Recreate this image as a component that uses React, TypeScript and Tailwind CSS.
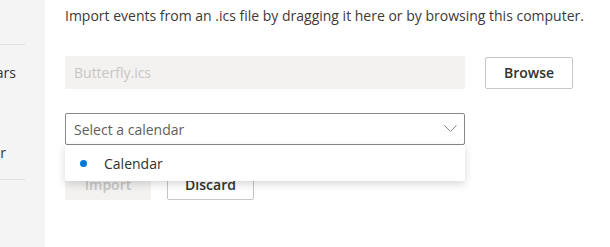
import React from 'react';

export default function App() {
  return (
    <div
      className="flex h-[247px] w-[610px] overflow-hidden bg-white text-[#323130]"
      style={{ fontFamily: '"Segoe UI", "Open Sans", sans-serif' }}
    >
      <aside className="w-[45px] shrink-0 overflow-hidden bg-[#f4f4f4] text-[14px]">
        <div className="mt-[44px] h-px w-[25px] bg-[#e1dfdd]" />
        <div className="mt-[18px] flex w-[16px] justify-end leading-[20px] whitespace-nowrap">
          <span>Calendars</span>
        </div>
        <div className="mt-[60px] flex w-[6px] justify-end leading-[20px] whitespace-nowrap">
          <span>New calendar</span>
        </div>
        <div className="mt-[16px] h-px w-[25px] bg-[#e1dfdd]" />
      </aside>

      <main className="flex-1 pl-[20px] pt-[6px]">
        <p className="text-[14px] leading-[20px] whitespace-nowrap text-[#3b3a39]">
          Import events from an .ics file by dragging it here or by browsing this computer.
        </p>

        <div className="mt-[30px] flex items-center gap-[20px]">
          <div className="flex h-[33px] w-[400px] items-center bg-[#f3f2f1] px-[9px] text-[14px] text-[#c8c6c4]">
            Butterfly.ics
          </div>
          <button className="h-[32px] w-[88px] rounded-[2px] border border-[#c8c6c4] bg-white text-[14px] font-semibold text-[#323130]">
            Browse
          </button>
        </div>

        <div className="relative mt-[24px] w-[400px]">
          <div className="flex h-[32px] items-center justify-between rounded-[2px] border border-[#8a8886] bg-white pl-[8px] pr-[7px] text-[14px] text-[#605e5c]">
            <span>Select a calendar</span>
            <svg width="13" height="8" viewBox="0 0 13 8" fill="none">
              <path d="M0.5 0.5 L6.5 6.5 L12.5 0.5" stroke="#8a8886" strokeWidth="1" />
            </svg>
          </div>

          <div className="mt-[23px] flex gap-[16px]">
            <button className="h-[32px] w-[86px] rounded-[2px] bg-[#f3f2f1] text-[14px] font-semibold text-[#c8c6c4]">
              Import
            </button>
            <button className="h-[32px] w-[87px] rounded-[2px] border border-[#c8c6c4] bg-white text-[14px] font-semibold text-[#323130]">
              Discard
            </button>
          </div>

          <div className="absolute left-0 top-[32px] z-10 flex h-[36px] w-[400px] items-center rounded-b-[2px] bg-white shadow-[0_3px_8px_rgba(0,0,0,0.16)]">
            <span className="ml-[15px] h-[7px] w-[7px] rounded-full bg-[#0078d4]" />
            <span className="ml-[17px] text-[14px] text-[#323130]">Calendar</span>
          </div>
        </div>
      </main>
    </div>
  );
}
